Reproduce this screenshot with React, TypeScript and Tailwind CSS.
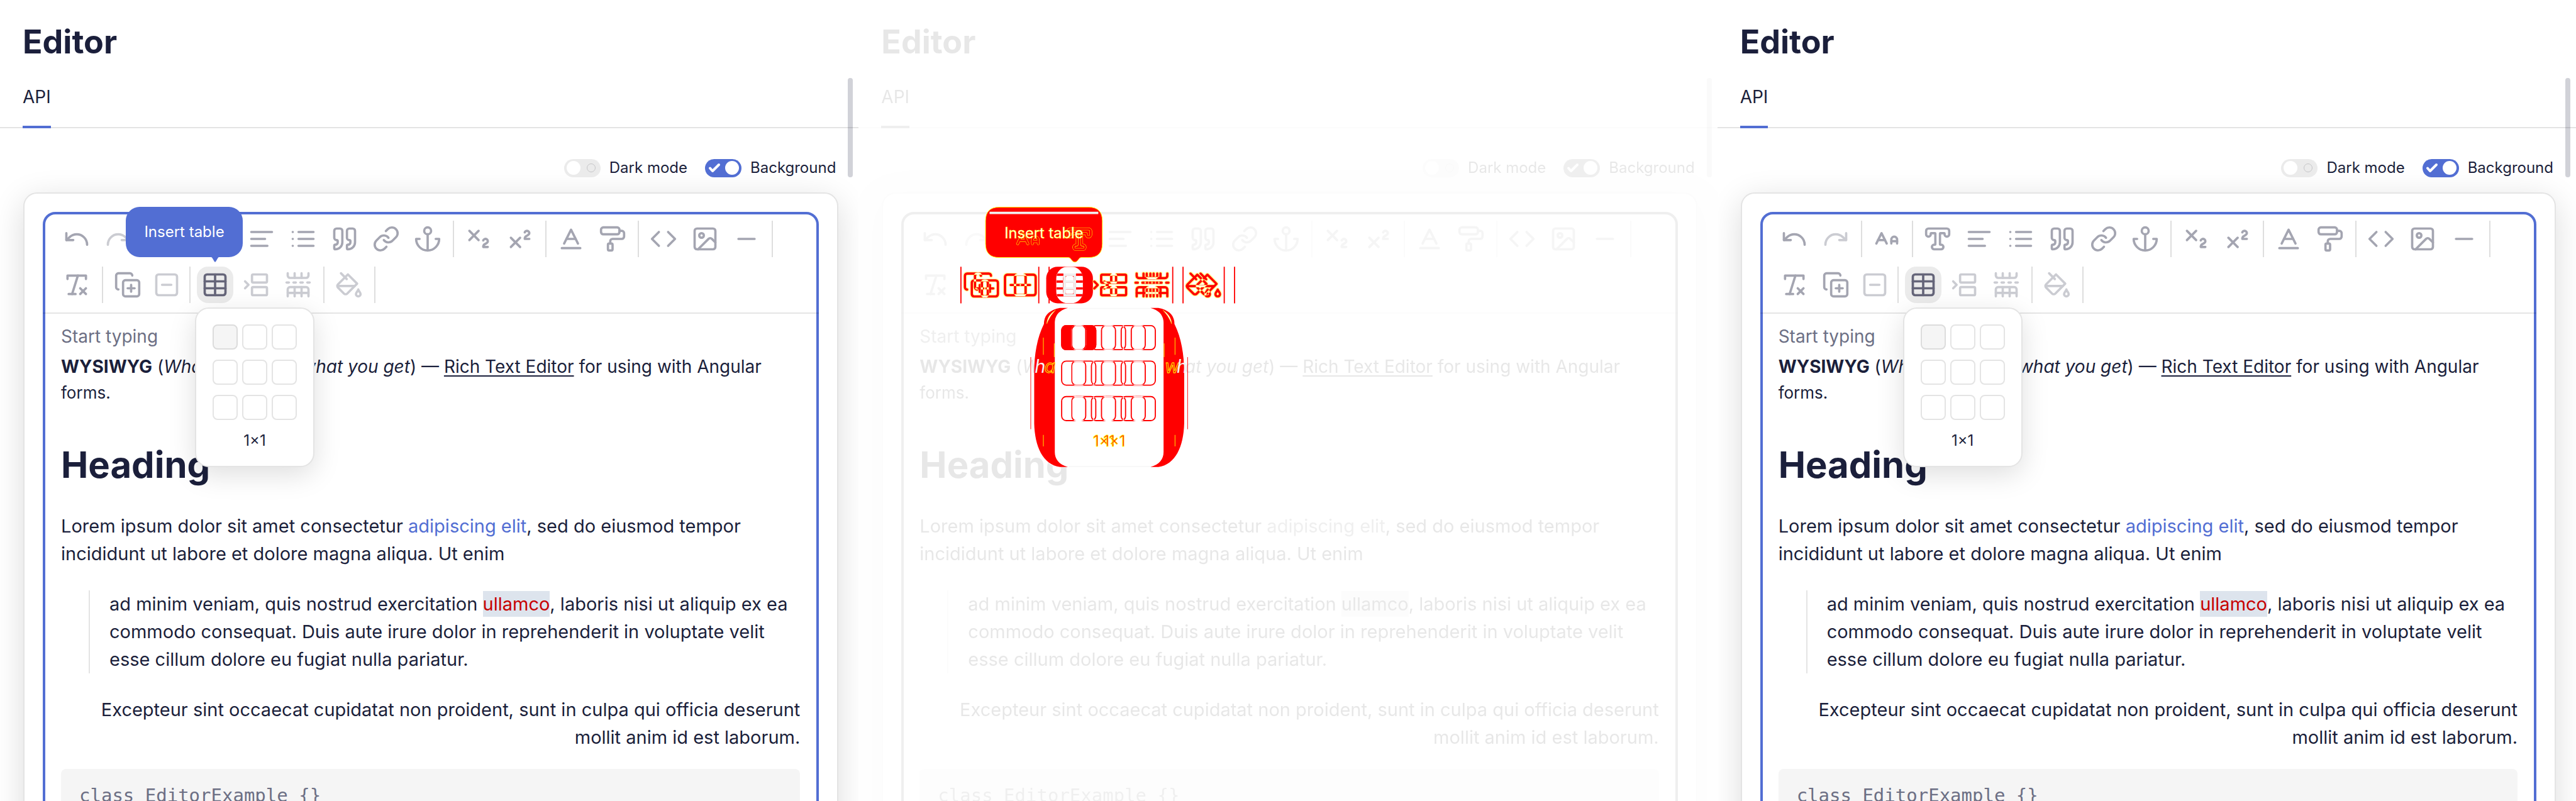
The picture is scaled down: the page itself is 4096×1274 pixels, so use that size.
import React from 'react';
import {
  Baseline,
  BetweenHorizontalStart,
  Code,
  CopyPlus,
  Image as ImageIcon,
  Link,
  Minus,
  PaintRoller,
  Quote,
  Redo,
  RemoveFormatting,
  SquareMinus,
  Subscript,
  Superscript,
  Table,
  TableRowsSplit,
  TypeOutline,
  Undo,
} from 'lucide-react';

type Variant = 'tooltip' | 'diff' | 'plain';

const TABLE_ROWS = [0, 1, 2];

function Glyph({ paths }: { paths: string[] }) {
  return (
    <svg
      viewBox="0 0 24 24"
      className="size-11"
      fill="none"
      stroke="currentColor"
      strokeWidth="2"
      strokeLinecap="round"
      strokeLinejoin="round"
      aria-hidden="true"
    >
      {paths.map((d) => (
        <path key={d} d={d} />
      ))}
    </svg>
  );
}

const fontSizePaths = ['M21 14h-5', 'M16 16v-3.5a2.5 2.5 0 0 1 5 0V16', 'M4.5 13h6', 'm3 16 4.5-9 4.5 9'];
const alignPaths = ['M3 6h18', 'M3 12h12', 'M3 18h14'];
const listPaths = ['M8 6h13', 'M8 12h13', 'M8 18h13', 'M3 6h.01', 'M3 12h.01', 'M3 18h.01'];
const anchorPaths = ['M12 22V8', 'M5 12H2a10 10 0 0 0 20 0h-3', 'M9 5a3 3 0 1 0 6 0a3 3 0 1 0-6 0'];
const bucketPaths = [
  'm19 11-8-8-8.6 8.6a2 2 0 0 0 0 2.8l5.2 5.2c.8.8 2 .8 2.8 0L19 11Z',
  'm5 2 5 5',
  'M2 13h15',
  'M22 20a2 2 0 1 1-4 0c0-1.6 1.7-2.4 2-4 .3 1.6 2 2.4 2 4Z',
];

function Tool({
  label,
  children,
  disabled,
}: {
  label: string;
  children: React.ReactNode;
  disabled?: boolean;
}) {
  return (
    <button
      type="button"
      aria-label={label}
      disabled={disabled}
      className="flex size-[58px] shrink-0 items-center justify-center rounded-[18px] text-[#a4a5b1] disabled:text-[#cbccd2]"
    >
      {children}
    </button>
  );
}

function Group({ children }: { children: React.ReactNode }) {
  return <div className="flex gap-2">{children}</div>;
}

function Divider() {
  return <div className="mr-[10px] ml-[11px] h-[58px] w-[2px] shrink-0 bg-[#dedede]" />;
}

function Tooltip() {
  return (
    <div
      role="tooltip"
      className="absolute -top-[95px] -left-[113px] z-20 flex h-20 w-[186px] items-center justify-center rounded-[22px] bg-[#526ed3] text-2xl whitespace-nowrap text-white"
    >
      Insert table
      <svg viewBox="0 0 24 12" className="absolute top-[79px] left-[130px] h-[9px] w-6" aria-hidden="true">
        <path d="M0 0h24c-3 0-4 1-6 3l-4.500 7.500q-1.500 2-3 0L6 3C4 1 3 0 0 0Z" fill="#526ed3" />
      </svg>
    </div>
  );
}

function SizePicker() {
  return (
    <div className="absolute top-[65px] -left-[3px] z-10 flex w-[190px] flex-col items-center rounded-[22px] border-2 border-[#e4e4e4] bg-white pt-[25px] pb-[25px] shadow-[0_12px_44px_rgba(0,0,0,0.13)]">
      <div className="grid grid-cols-3 gap-x-[7px] gap-y-4">
        {TABLE_ROWS.map((row) =>
          TABLE_ROWS.map((col) => (
            <button
              key={`${row}-${col}`}
              type="button"
              aria-label={`${row + 1}×${col + 1}`}
              className={
                row === 0 && col === 0
                  ? 'size-10 rounded-lg border-2 border-[#dcdcdc] bg-[#f5f5f5]'
                  : 'size-10 rounded-lg border-2 border-[#e4e4e4] bg-white'
              }
            />
          )),
        )}
      </div>
      <span className="mt-[18px] text-2xl leading-[30px] text-[#1b1f3b]">1×1</span>
    </div>
  );
}

function Toolbar({ variant }: { variant: Variant }) {
  const icon = 'size-11';
  return (
    <div className="-mx-1 flex flex-col gap-[15px] border-b-2 border-black/10 pt-[10px] pb-[15px] pl-[25px]">
      <div className="flex">
        <Group>
          <Tool label="Undo"><Undo className={icon} /></Tool>
          <Tool label="Redo" disabled><Redo className={icon} /></Tool>
        </Group>
        <Divider />
        <Tool label="Font size"><Glyph paths={fontSizePaths} /></Tool>
        <Divider />
        <Group>
          <Tool label="Font style"><TypeOutline className={icon} /></Tool>
          <Tool label="Align"><Glyph paths={alignPaths} /></Tool>
          <Tool label="List"><Glyph paths={listPaths} /></Tool>
          <Tool label="Quote"><Quote className={icon} /></Tool>
          <Tool label="Link"><Link className={icon} /></Tool>
          <Tool label="Anchor"><Glyph paths={anchorPaths} /></Tool>
        </Group>
        <Divider />
        <Group>
          <Tool label="Subscript"><Subscript className={icon} /></Tool>
          <Tool label="Superscript"><Superscript className={icon} /></Tool>
        </Group>
        <Divider />
        <Group>
          <Tool label="Text color"><Baseline className={icon} /></Tool>
          <Tool label="Background color"><PaintRoller className={icon} /></Tool>
        </Group>
        <Divider />
        <Group>
          <Tool label="Code"><Code className={icon} /></Tool>
          <Tool label="Image"><ImageIcon className={icon} /></Tool>
          <Tool label="Horizontal rule"><Minus className={icon} /></Tool>
        </Group>
        <Divider />
      </div>
      <div className="flex">
        <Tool label="Clear formatting"><RemoveFormatting className={icon} /></Tool>
        {variant === 'tooltip' && <Divider />}
        {variant === 'plain' && <div className="w-2" />}
        {variant !== 'diff' && (
          <>
            <div className="flex gap-1">
              <Tool label="Add group"><CopyPlus className={icon} /></Tool>
              <Tool label="Remove group" disabled><SquareMinus className={icon} /></Tool>
            </div>
            <div className="mr-[10px] ml-[7px] h-[58px] w-[2px] bg-[#dedede]" />
            <Group>
              <div className="relative">
                <button
                  type="button"
                  aria-label="Insert table"
                  className="flex size-[58px] items-center justify-center rounded-[18px] bg-[#ebebeb] text-[#656579]"
                >
                  <Table className={icon} />
                </button>
                {variant === 'tooltip' && <Tooltip />}
                <SizePicker />
              </div>
              <Tool label="Insert cell" disabled><BetweenHorizontalStart className={icon} /></Tool>
              <Tool label="Split rows" disabled><TableRowsSplit className={icon} /></Tool>
            </Group>
            <Divider />
            <Tool label="Cell color" disabled><Glyph paths={bucketPaths} /></Tool>
            <Divider />
          </>
        )}
      </div>
    </div>
  );
}

function Switch({ label, checked }: { label: string; checked?: boolean }) {
  return (
    <label className="flex items-center gap-[14px] text-2xl leading-[30px]">
      <input type="checkbox" role="switch" defaultChecked={checked} className="peer sr-only" />
      {checked ? (
        <span className="flex h-[29px] w-[58px] items-center justify-between rounded-full bg-[#526ed3] pr-1 pl-[5px]">
          <svg viewBox="0 0 20 18" className="h-[18px] w-5" fill="none" stroke="white" strokeWidth="4" strokeLinecap="round" strokeLinejoin="round" aria-hidden="true">
            <path d="M3 9.500 7 14 17 4" />
          </svg>
          <span className="size-[22px] rounded-full bg-white" />
        </span>
      ) : (
        <span className="flex h-[29px] w-[58px] items-center justify-between rounded-full bg-[#ebebeb] pr-2 pl-1">
          <span className="size-[22px] rounded-full bg-white" />
          <span className="size-[14px] rounded-full border border-[#c6c6c8]" />
        </span>
      )}
      {label}
    </label>
  );
}

function Content() {
  return (
    <div className="pt-[14px] pr-[26px] pl-[25px] text-[29px] leading-[44px]">
      <p className="text-[28px] text-[#6c6f84]">Start typing</p>
      <p className="mt-1 text-[28px] whitespace-nowrap">
        <strong className="font-bold">WYSIWYG</strong> (<em>What you see is what you get</em>) —{' '}
        <u className="underline underline-offset-4">Rich Text Editor</u> for using with Angular
      </p>
      <p className="text-[26px] leading-10">forms.</p>
      <h2 className="mt-[60px] text-[58px] leading-[68px] font-bold">Heading</h2>
      <p className="mt-[42px] whitespace-nowrap">
        Lorem ipsum dolor sit amet consectetur{' '}
        <a href="#elit" className="text-[#526ed3]">adipiscing elit</a>, sed do eiusmod tempor
        <br />
        incididunt ut labore et dolore magna aliqua. Ut enim
      </p>
      <blockquote className="mt-9 ml-11 border-l-2 border-[#e4e4e4] pl-[31px] whitespace-nowrap">
        ad minim veniam, quis nostrud exercitation{' '}
        <span className="bg-[#dde4ed] py-[3px] text-[#c70000]">ullamco</span>, laboris nisi ut aliquip ex ea
        <br />
        commodo consequat. Duis aute irure dolor in reprehenderit in voluptate velit
        <br />
        esse cillum dolore eu fugiat nulla pariatur.
      </blockquote>
      <p className="mt-9 flex flex-col items-end whitespace-nowrap">
        <span>Excepteur sint occaecat cupidatat non proident, sunt in culpa qui officia deserunt</span>
        <span>mollit anim id est laborum.</span>
      </p>
      <pre className="mt-7 rounded-lg bg-[#f5f5f5] px-[29px] py-6 text-[29px] leading-9 text-[#6c6f84]">
        <code className="font-['DejaVu_Sans_Mono',monospace]">{'class EditorExample {}'}</code>
      </pre>
    </div>
  );
}

function Page({ variant }: { variant: Variant }) {
  return (
    <div className="relative h-full overflow-hidden bg-white text-[#1b1f3b]">
      <h1 className="px-9 pt-[37px] text-[52px] leading-[60px] font-bold">Editor</h1>
      <nav className="flex border-b-2 border-[#e4e4e4] px-9">
        <button
          type="button"
          className="-mb-[2px] h-[107px] border-b-4 border-[#526ed3] pt-[10px] text-[28px] leading-10"
        >
          API
        </button>
      </nav>
      <div className="mt-12 mr-[36px] flex justify-end gap-7">
        <Switch label="Dark mode" />
        <Switch label="Background" checked />
      </div>
      <section className="mt-6 mr-8 ml-[37px] rounded-[22px] border-2 border-[#e4e4e4] bg-white px-[29px] pt-[29px] pb-10 shadow-[0_12px_52px_rgba(0,0,0,0.14)]">
        <div className="rounded-[20px] border-4 border-[#526ed3] pb-10">
          <Toolbar variant={variant} />
          <Content />
        </div>
      </section>
      <div className="absolute top-[124px] right-[9px] h-[158px] w-2 rounded-full bg-[#1b1f3b]/20" />
    </div>
  );
}

function DiffIcon({ x, y, children }: { x: number; y: number; children: React.ReactNode }) {
  return (
    <svg x={x - 24} y={y - 24} width="48" height="48" viewBox="0 0 24 24" overflow="visible">
      {children}
    </svg>
  );
}

/* Highlights of the pixels that moved between the two pages. */
function DiffOverlay() {
  return (
    <svg viewBox="0 0 1500 1400" className="absolute top-0 left-0 w-full" fill="none" aria-label="Changed pixels">
      <defs>
        <filter id="shift" filterUnits="userSpaceOnUse" x="150" y="440" width="600" height="400" colorInterpolationFilters="sRGB">
          <feOffset in="SourceGraphic" dx="18" dy="0" result="moved" />
          <feComposite in="SourceGraphic" in2="moved" operator="xor" />
        </filter>
        <filter id="shiftEdge" filterUnits="userSpaceOnUse" x="150" y="440" width="600" height="400" colorInterpolationFilters="sRGB">
          <feOffset in="SourceGraphic" dx="18" dy="0" result="moved" />
          <feComposite in="SourceGraphic" in2="moved" operator="xor" result="changed" />
          <feMorphology in="changed" operator="dilate" radius="0.800" result="fat" />
          <feFlood floodColor="#ffff00" floodOpacity="0.450" />
          <feComposite in2="fat" operator="in" result="edge" />
          <feMerge>
            <feMergeNode in="edge" />
            <feMergeNode in="changed" />
          </feMerge>
        </filter>
        <clipPath id="common">
          <rect x="346" y="466" width="46" height="64" rx="20" />
        </clipPath>
      </defs>

      {/* size picker area */}
      <rect x="325" y="538" width="227" height="278" rx="24" fill="white" />
      <path
        fillRule="evenodd"
        d="M352 538C332 542 324 552 324 566C312 590 307 620 307 650V740C308 780 322 812 352 816H366C350 812 343 802 343 790V564C343 552 350 542 366 538ZM524 538C544 542 552 552 552 566C564 590 569 620 569 650V740C568 780 554 812 524 816H510C526 812 533 802 533 790V564C533 552 526 542 510 538Z"
        fill="#ff0000"
      />
      <path d="M367 539H510M367 815H510" stroke="#f8f8f8" strokeWidth="2" />
      <path d="M329 566Q329 552 344 542Q333 554 329 566ZM547 566Q547 552 532 542Q543 554 547 566Z" fill="white" stroke="#ffff00" strokeWidth="0.500" />
      <path d="M301 624v126M575 624v126" stroke="#ff0000" strokeWidth="1" />
      <path d="M323 590v30M323 760v20M342 600v24M553 590v30M553 760v20M534 600v24" stroke="#ffff00" strokeWidth="1" />
      <g fontSize="32" fontStyle="italic" fontFamily="Inter, sans-serif">
        <text x="308" y="652" fill="#f4f4f4">h</text>
        <text x="325" y="652" fill="#ff0000" stroke="#ffff00" strokeWidth="1">a</text>
        <text x="535" y="652" fill="#ff0000" stroke="#ffff00" strokeWidth="1">w</text>
        <text x="556" y="652" fill="#f4f4f4">h</text>
      </g>

      <g filter="url(#shift)" stroke="#ff0000" strokeWidth="2">
        {[568, 630, 692].map((y) =>
          [355, 407, 459].map((x) => <rect key={`${x}-${y}`} x={x} y={y + 1} width="42" height="42" rx="8" />),
        )}
      </g>
      <g filter="url(#shift)" fill="#ff0000">
        <rect x="354" y="568" width="44" height="44" rx="9" />
      </g>

      {/* toolbar row */}
      <g filter="url(#shift)">
        <rect x="328" y="466" width="64" height="64" rx="20" fill="#ff0000" />
      </g>
      <path d="M179 466v64M315 466v64M333 466v64M549 466v64M567 466v64M639 466v64M657 466v64" stroke="#ff0000" strokeWidth="2" />
      <g clipPath="url(#common)">
        <g filter="url(#shift)" stroke="#ff0000" strokeWidth="4">
          <path d="M342 486q0-6 6-6h24q6 0 6 6v24q0 6-6 6h-24q-6 0-6-6zM342 492h36M342 504h36" />
        </g>
        <path d="M360 480h18v36h-18zM360 492h18M360 504h18" stroke="#f0f0f0" strokeWidth="4" />
      </g>
      <g filter="url(#shiftEdge)" stroke="#ff0000" strokeLinecap="round" strokeLinejoin="round">
        <DiffIcon x={206} y={498}><CopyPlus color="#ff0000" /></DiffIcon>
        <DiffIcon x={274} y={498}><SquareMinus color="#ff0000" /></DiffIcon>
        <DiffIcon x={432} y={498}><BetweenHorizontalStart color="#ff0000" /></DiffIcon>
        <DiffIcon x={504} y={498}><TableRowsSplit color="#ff0000" /></DiffIcon>
        <DiffIcon x={594} y={498}>
          {bucketPaths.map((d) => (
            <path key={d} d={d} strokeWidth="2" />
          ))}
        </DiffIcon>
      </g>
      <g fontSize="26" fontFamily="Inter, sans-serif" fill="#ff0000" stroke="#ffff00" strokeWidth="0.900" textAnchor="middle">
        <text x="429" y="780">1×1</text>
        <text x="447" y="780">1×1</text>
      </g>

      {/* tooltip */}
      <path
        d="M246 362h156q24 0 24 24v40q0 24-24 24h-12c-3 0-4 1-6 4l-3 3q-3 2-6 0l-3-3c-2-3-3-4-6-4h-120q-24 0-24-24v-40q0-24 24-24z"
        fill="#ff0000"
        stroke="#ffff00"
        strokeWidth="1"
      />
      <path d="M229 372h190" stroke="#f0f0f0" strokeWidth="4" />
      <g strokeLinecap="round" strokeLinejoin="round">
        <DiffIcon x={296} y={418}>
          {fontSizePaths.map((d) => <path key={d} d={d} stroke="#ffff00" strokeWidth="2.300" />)}
          {fontSizePaths.map((d) => <path key={`${d}-in`} d={d} stroke="#ff0000" strokeWidth="1.700" />)}
        </DiffIcon>
        <DiffIcon x={386} y={418}>
          <TypeOutline color="#ffff00" strokeWidth={2.3} />
          <TypeOutline color="#ff0000" strokeWidth={1.7} />
        </DiffIcon>
      </g>
      <text x="324" y="416" fontSize="26" textAnchor="middle" fontFamily="Inter, sans-serif" fill="white" stroke="#ffff00" strokeWidth="0.600">
        Insert table
      </text>
    </svg>
  );
}

export default function App() {
  return (
    <main className="grid h-screen grid-cols-3 overflow-hidden bg-white font-['Inter',sans-serif]">
      <Page variant="tooltip" />
      <div className="relative overflow-hidden">
        <div className="h-full opacity-10 grayscale">
          <Page variant="diff" />
        </div>
        <DiffOverlay />
      </div>
      <Page variant="plain" />
    </main>
  );
}
